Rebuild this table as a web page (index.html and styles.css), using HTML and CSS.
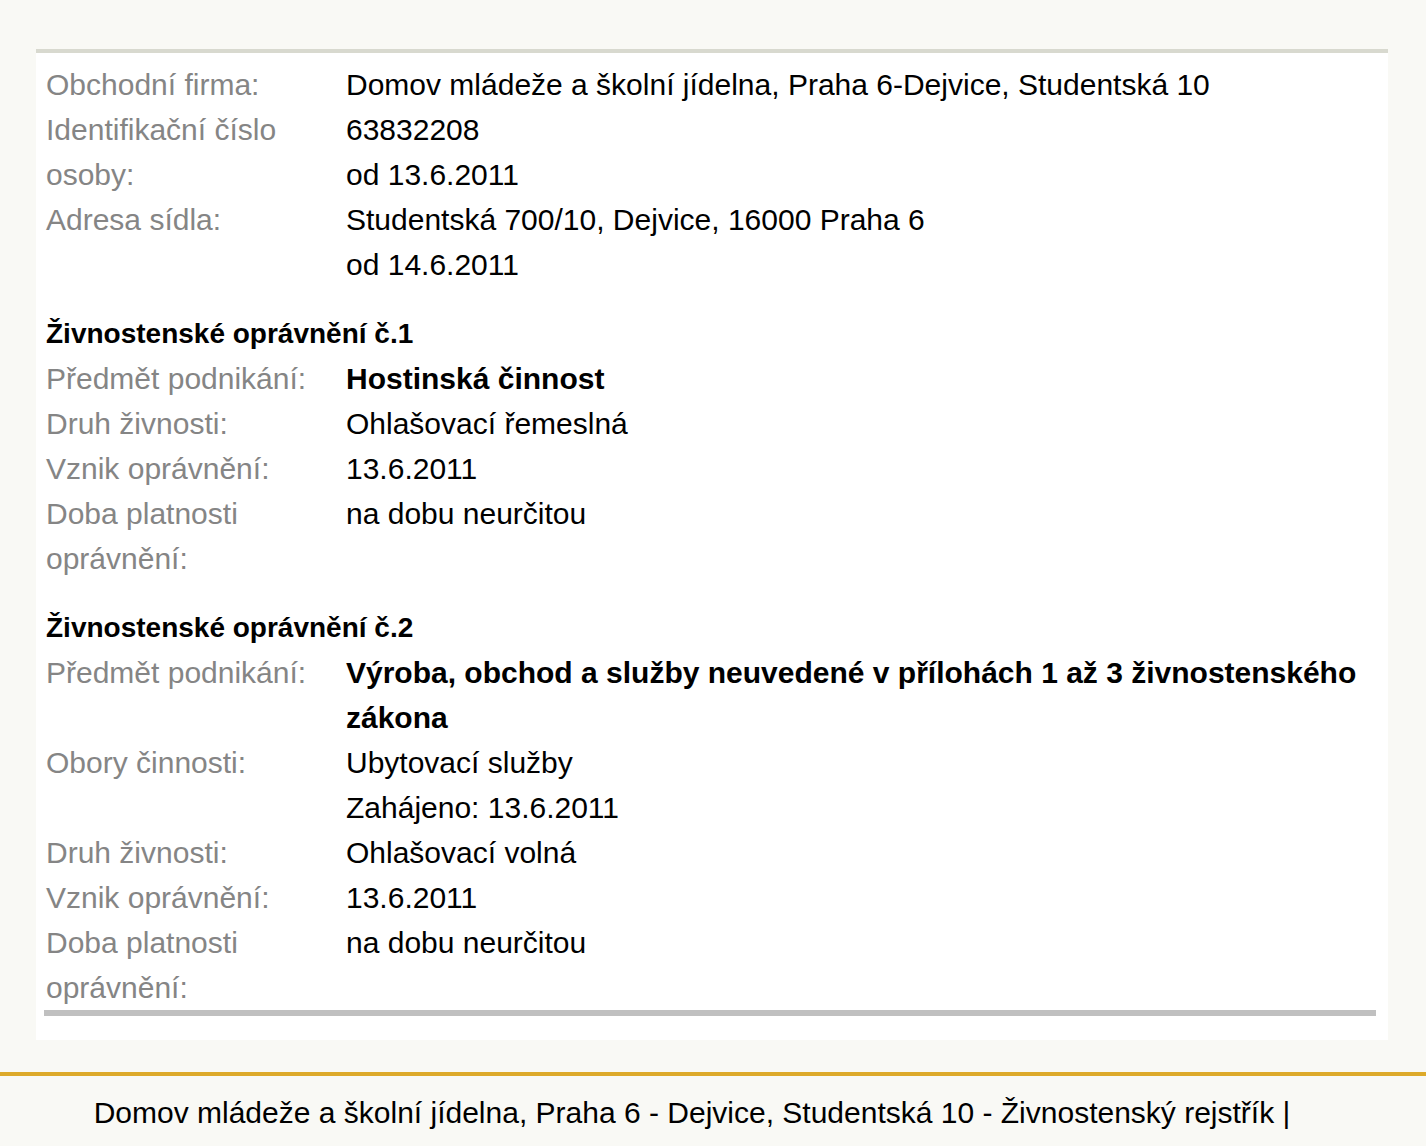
FILE: index.html
```html
<!DOCTYPE html>
<html lang="cs">
<head>
<meta charset="utf-8">
<title>Živnostenský rejstřík</title>
<link rel="stylesheet" href="styles.css">
</head>
<body>
<div class="panel">
  <div class="rows">
    <div class="lbl">Obchodní firma:</div>
    <div class="val">Domov mládeže a školní jídelna, Praha 6-Dejvice, Studentská 10</div>
    <div class="lbl">Identifikační číslo osoby:</div>
    <div class="val">63832208<br>od 13.6.2011</div>
    <div class="lbl">Adresa sídla:</div>
    <div class="val">Studentská 700/10, Dejvice, 16000 Praha 6<br>od 14.6.2011</div>
  </div>

  <h3 class="head">Živnostenské oprávnění č.1</h3>
  <div class="rows">
    <div class="lbl">Předmět podnikání:</div>
    <div class="val"><b>Hostinská činnost</b></div>
    <div class="lbl">Druh živnosti:</div>
    <div class="val">Ohlašovací řemeslná</div>
    <div class="lbl">Vznik oprávnění:</div>
    <div class="val">13.6.2011</div>
    <div class="lbl">Doba platnosti oprávnění:</div>
    <div class="val">na dobu neurčitou</div>
  </div>

  <h3 class="head">Živnostenské oprávnění č.2</h3>
  <div class="rows">
    <div class="lbl">Předmět podnikání:</div>
    <div class="val"><b>Výroba, obchod a služby neuvedené v přílohách 1 až 3 živnostenského zákona</b></div>
    <div class="lbl">Obory činnosti:</div>
    <div class="val">Ubytovací služby<br>Zahájeno: 13.6.2011</div>
    <div class="lbl">Druh živnosti:</div>
    <div class="val">Ohlašovací volná</div>
    <div class="lbl">Vznik oprávnění:</div>
    <div class="val">13.6.2011</div>
    <div class="lbl">Doba platnosti oprávnění:</div>
    <div class="val">na dobu neurčitou</div>
  </div>
  <div class="rule"></div>
</div>

<footer class="foot">
  <p>Domov mládeže a školní jídelna, Praha 6 - Dejvice, Studentská 10 - Živnostenský rejstřík |</p>
</footer>
</body>
</html>
```

FILE: styles.css
```css
html, body {
  margin: 0;
  padding: 0;
  background: #f9f9f5;
  font-family: "Liberation Sans", Arial, sans-serif;
  color: #000;
}

body {
  padding-top: 49px;
}

.panel {
  margin: 0 38px 0 36px;
  background: #fff;
  border-top: 4px solid #d8d9cf;
  padding: 9px 12px 24px 10px;
}

.rows {
  display: grid;
  grid-template-columns: 300px 1fr;
  font-size: 30px;
  line-height: 45px;
}

.lbl {
  color: #858585;
  padding-right: 10px;
}

.val b {
  font-weight: bold;
}

.head {
  margin: 24px 0 0;
  font-size: 28px;
  line-height: 45px;
  font-weight: bold;
}

.rule {
  height: 6px;
  background: #c0c0c0;
  margin-left: -2px;
}

.foot {
  margin-top: 32px;
  border-top: 4px solid #ddaa2a;
}

.foot p {
  margin: 0;
  padding: 14px 42px 0 0;
  text-align: center;
  font-size: 30px;
  line-height: 45px;
}
```
